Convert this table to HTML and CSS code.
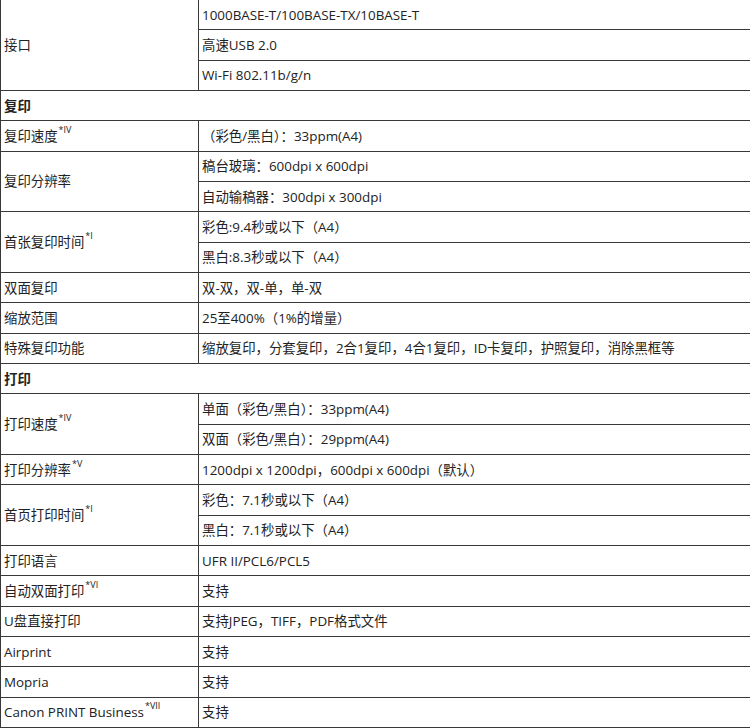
FILE: index.html
```html
<!DOCTYPE html>
<html lang="zh-CN">
<head>
<meta charset="utf-8">
<link rel="stylesheet" href="styles.css">
</head>
<body>
<table class="spec">
  <colgroup><col class="c1"><col class="c2"></colgroup>
  <tr><td rowspan="3">接口</td><td>1000BASE-T/100BASE-TX/10BASE-T</td></tr>
  <tr><td>高速USB 2.0</td></tr>
  <tr><td>Wi-Fi 802.11b/g/n</td></tr>
  <tr><td colspan="2" class="section">复印</td></tr>
  <tr><td>复印速度<sup>*IV</sup></td><td>（彩色/黑白）：33ppm(A4)</td></tr>
  <tr><td rowspan="2">复印分辨率</td><td>稿台玻璃：600dpi x 600dpi</td></tr>
  <tr><td>自动输稿器：300dpi x 300dpi</td></tr>
  <tr><td rowspan="2">首张复印时间<sup>*I</sup></td><td>彩色:9.4秒或以下（A4）</td></tr>
  <tr><td>黑白:8.3秒或以下（A4）</td></tr>
  <tr><td>双面复印</td><td>双-双，双-单，单-双</td></tr>
  <tr><td>缩放范围</td><td>25至400%（1%的增量）</td></tr>
  <tr><td>特殊复印功能</td><td>缩放复印，分套复印，2合1复印，4合1复印，ID卡复印，护照复印，消除黑框等</td></tr>
  <tr><td colspan="2" class="section">打印</td></tr>
  <tr><td rowspan="2">打印速度<sup>*IV</sup></td><td>单面（彩色/黑白）：33ppm(A4)</td></tr>
  <tr><td>双面（彩色/黑白）：29ppm(A4)</td></tr>
  <tr><td>打印分辨率<sup>*V</sup></td><td>1200dpi x 1200dpi，600dpi x 600dpi（默认）</td></tr>
  <tr><td rowspan="2">首页打印时间<sup>*I</sup></td><td>彩色：7.1秒或以下（A4）</td></tr>
  <tr><td>黑白：7.1秒或以下（A4）</td></tr>
  <tr><td>打印语言</td><td>UFR II/PCL6/PCL5</td></tr>
  <tr><td>自动双面打印<sup>*VI</sup></td><td>支持</td></tr>
  <tr><td>U盘直接打印</td><td>支持JPEG，TIFF，PDF格式文件</td></tr>
  <tr><td>Airprint</td><td>支持</td></tr>
  <tr><td>Mopria</td><td>支持</td></tr>
  <tr><td>Canon PRINT Business<sup>*VII</sup></td><td>支持</td></tr>
</table>
</body>
</html>
```

FILE: styles.css
```css
html, body {
  margin: 0;
  padding: 0;
  background: #fff;
}
body {
  font-family: "Open Sans", "Noto Sans CJK SC", sans-serif;
  font-size: 13.4px;
  color: #222;
  overflow: hidden;
}
.spec {
  width: 750px;
  border-collapse: collapse;
  table-layout: fixed;
  margin-top: -1px;
}
.c1 { width: 198px; }
.c2 { width: 552px; }
.spec tr {
  height: 30.34px;
}
.spec td {
  border: 1px solid #383838;
  padding: 0 3px;
  vertical-align: middle;
  line-height: 18px;
  white-space: nowrap;
}
.spec td.section {
  font-weight: bold;
}
.spec sup {
  font-size: 9px;
  line-height: 0;
  vertical-align: 8px;
  margin-left: 1px;
}
```
